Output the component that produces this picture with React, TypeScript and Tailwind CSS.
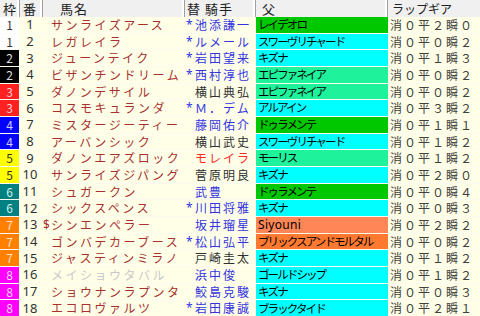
import React from 'react';

type Row = {
  waku: number;
  no: number;
  mark?: string;
  name: string;
  scratched?: boolean;
  star?: boolean;
  jockey: string;
  jc: 'blue' | 'black' | 'red';
  sire: string;
  sc: string;
  lap: string;
};

const WAKU: Record<number, string> = {
  1: 'bg-white text-[#333333]',
  2: 'bg-black text-[#e0e0e0]',
  3: 'bg-[#ff2020] text-[#ffd0d0]',
  4: 'bg-[#0000ff] text-[#d0d0ff]',
  5: 'bg-[#ffff00] text-[#333333]',
  6: 'bg-[#008080] text-[#d0f0f0]',
  7: 'bg-[#ff8000] text-[#ffe0c0]',
  8: 'bg-[#ff00ff] text-[#ffd8ff]',
};

const JC = {
  blue: 'text-[#3434e0]',
  black: 'text-[#303030]',
  red: 'text-[#ff2a2a]',
};

const GREEN = 'bg-[#00c800]';
const CYAN = 'bg-[#00ffff]';
const SPRING = 'bg-[#1ef29a]';
const SALMON = 'bg-[#ff8656]';
const ORANGE = 'bg-[#ff7a30]';

const rows: Row[] = [
  { waku: 1, no: 1, name: 'サンライズアース', star: true, jockey: '池添謙一', jc: 'blue', sire: 'レイデオロ', sc: GREEN, lap: '消０平２瞬０' },
  { waku: 1, no: 2, name: 'レガレイラ', star: true, jockey: 'ルメール', jc: 'blue', sire: 'スワーヴリチャード', sc: CYAN, lap: '消０平０瞬２' },
  { waku: 2, no: 3, name: 'ジューンテイク', star: true, jockey: '岩田望来', jc: 'blue', sire: 'キズナ', sc: CYAN, lap: '消０平１瞬３' },
  { waku: 2, no: 4, name: 'ビザンチンドリーム', star: true, jockey: '西村淳也', jc: 'blue', sire: 'エピファネイア', sc: SPRING, lap: '消０平０瞬２' },
  { waku: 3, no: 5, name: 'ダノンデサイル', jockey: '横山典弘', jc: 'black', sire: 'エピファネイア', sc: SPRING, lap: '消０平０瞬２' },
  { waku: 3, no: 6, name: 'コスモキュランダ', star: true, jockey: 'Ｍ．デム', jc: 'blue', sire: 'アルアイン', sc: CYAN, lap: '消０平３瞬２' },
  { waku: 4, no: 7, name: 'ミスタージーティー', jockey: '藤岡佑介', jc: 'blue', sire: 'ドゥラメンテ', sc: GREEN, lap: '消０平１瞬１' },
  { waku: 4, no: 8, name: 'アーバンシック', jockey: '横山武史', jc: 'black', sire: 'スワーヴリチャード', sc: CYAN, lap: '消０平１瞬２' },
  { waku: 5, no: 9, name: 'ダノンエアズロック', jockey: 'モレイラ', jc: 'red', sire: 'モーリス', sc: SPRING, lap: '消０平１瞬２' },
  { waku: 5, no: 10, name: 'サンライズジパング', jockey: '菅原明良', jc: 'black', sire: 'キズナ', sc: CYAN, lap: '消０平２瞬０' },
  { waku: 6, no: 11, name: 'シュガークン', jockey: '武豊', jc: 'blue', sire: 'ドゥラメンテ', sc: GREEN, lap: '消０平０瞬４' },
  { waku: 6, no: 12, name: 'シックスペンス', star: true, jockey: '川田将雅', jc: 'blue', sire: 'キズナ', sc: CYAN, lap: '消０平０瞬３' },
  { waku: 7, no: 13, mark: '$', name: 'シンエンペラー', jockey: '坂井瑠星', jc: 'blue', sire: 'Siyouni', sc: SALMON, lap: '消０平２瞬２' },
  { waku: 7, no: 14, name: 'ゴンバデカーブース', star: true, jockey: '松山弘平', jc: 'blue', sire: 'ブリックスアンドモルタル', sc: ORANGE, lap: '消０平０瞬２' },
  { waku: 7, no: 15, name: 'ジャスティンミラノ', jockey: '戸崎圭太', jc: 'black', sire: 'キズナ', sc: CYAN, lap: '消０平１瞬２' },
  { waku: 8, no: 16, name: 'メイショウタバル', scratched: true, jockey: '浜中俊', jc: 'blue', sire: 'ゴールドシップ', sc: CYAN, lap: '消０平１瞬２' },
  { waku: 8, no: 17, name: 'ショウナンラプンタ', jockey: '鮫島克駿', jc: 'blue', sire: 'キズナ', sc: CYAN, lap: '消０平０瞬３' },
  { waku: 8, no: 18, name: 'エコロヴァルツ', star: true, jockey: '岩田康誠', jc: 'blue', sire: 'ブラックタイド', sc: CYAN, lap: '消０平２瞬１' },
];

const font = "font-['Noto_Sans_CJK_JP','Noto_Sans',sans-serif]";
const COLS = 'grid-cols-[20px_23px_142px_71px_132px_92px]';

function HeadCell({ label, className = '' }: { label: string; className?: string }) {
  return (
    <div className={`flex items-center border-r border-r-[#a0a0a0] shadow-[inset_-2px_0_0_#ffffff] whitespace-nowrap overflow-hidden ${className}`}>
      {label}
    </div>
  );
}

export default function App() {
  return (
    <div className={`w-[480px] h-[316px] overflow-hidden bg-[#ffffe8] ${font} flex flex-col`}>
      <div className={`grid ${COLS} h-[17px] bg-[#f0f0f0] text-[12px] leading-none text-[#202020]`}>
        <HeadCell label="枠" className="pl-[3px] text-[13px]" />
        <HeadCell label="番" className="pl-[3px] text-[13px]" />
        <HeadCell label="馬名" className="pl-[17px] tracking-[1px] text-[13px]" />
        <HeadCell label="替 騎手" className="pl-[2px] tracking-[1px] text-[13px]" />
        <HeadCell label="父" className="pl-[6px] text-[13px]" />
        <div className="flex items-center pl-[4px]">ラップギア</div>
      </div>
      <div className="flex-1 flex flex-col">
        {rows.map((r) => (
          <div
            key={r.no}
            className={`flex-1 min-h-0 grid ${COLS} border-b border-b-[#fafaf0] last:border-b-0 text-[12px] leading-none whitespace-nowrap`}
          >
            <div className={`flex items-center justify-center mr-[1px] text-[12px] ${WAKU[r.waku]}`}>{r.waku}</div>
            <div className="flex items-center justify-center pr-[3px] text-[#333333] text-[13px] font-['Noto_Sans',sans-serif]">
              {r.no}
            </div>
            <div className={`flex items-center overflow-hidden ${r.scratched ? 'text-[#c8c8c8]' : 'text-[#a83030]'}`}>
              <span className="w-[8px] text-[12px] font-['Noto_Sans',sans-serif]">{r.mark ?? ''}</span>
              <span className="tracking-[2.5px]">{r.name}</span>
            </div>
            <div className={`flex items-center pl-[1px] overflow-hidden ${JC[r.jc]}`}>
              <span className="w-[9px] text-[12px] font-['Noto_Sans',sans-serif]">{r.star ? '*' : ''}</span>
              <span className="tracking-[2px]">{r.jockey}</span>
            </div>
            <div className={`flex items-center pl-[2px] overflow-hidden text-black ${r.sc}`}>
              {r.sire === 'Siyouni' ? (
                <span className="tracking-[0.3px] text-[12px] font-['Noto_Sans',sans-serif]">{r.sire}</span>
              ) : (
                <span className="text-[11.5px] tracking-[-1.9px]">{r.sire}</span>
              )}
            </div>
            <div className="flex items-center pl-[2px] text-[#404040] tracking-[2px]">{r.lap}</div>
          </div>
        ))}
      </div>
    </div>
  );
}
